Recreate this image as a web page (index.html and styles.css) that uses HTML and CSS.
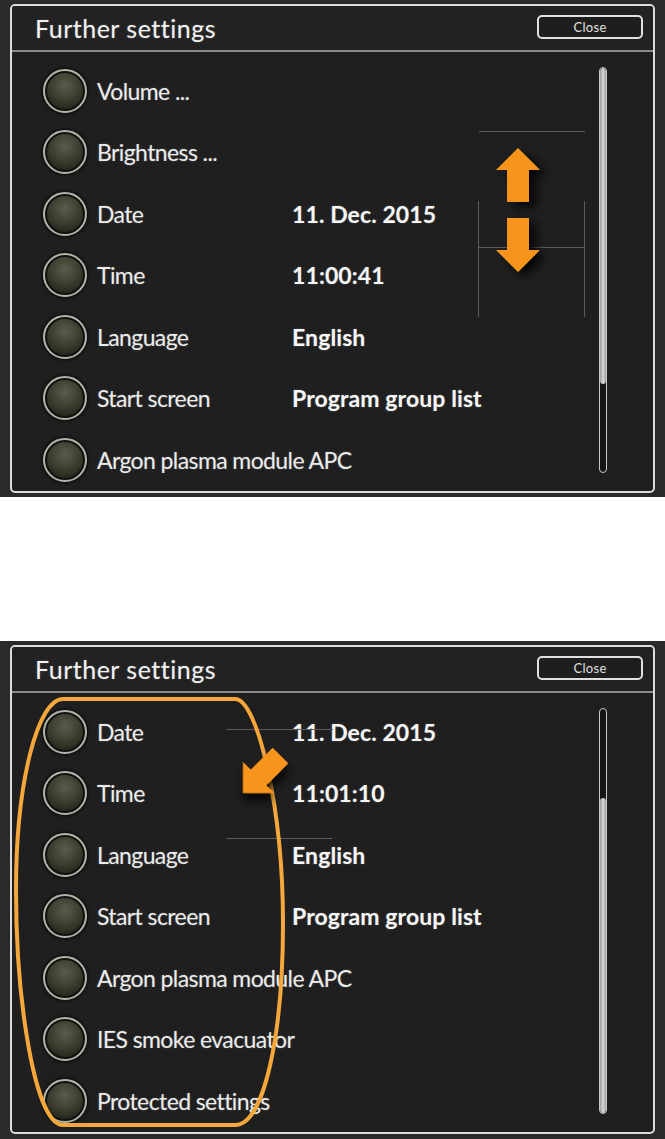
FILE: index.html
```html
<!DOCTYPE html>
<html lang="en">
<head>
<meta charset="utf-8">
<title>Further settings</title>
<link rel="stylesheet" href="styles.css">
</head>
<body>
<div class="page">
  <section class="screen screen-a">
    <div class="panel">
      <header class="panel-head">
        <h1 class="title">Further settings</h1>
        <button class="close">Close</button>
      </header>
      <div class="panel-body">
        <ul class="list">
          <li class="row"><span class="knob"></span><span class="label">Volume ...</span></li>
          <li class="row"><span class="knob"></span><span class="label">Brightness ...</span></li>
          <li class="row"><span class="knob"></span><span class="label">Date</span><span class="value">11. Dec. 2015</span></li>
          <li class="row"><span class="knob"></span><span class="label">Time</span><span class="value">11:00:41</span></li>
          <li class="row"><span class="knob"></span><span class="label">Language</span><span class="value">English</span></li>
          <li class="row"><span class="knob"></span><span class="label">Start screen</span><span class="value">Program group list</span></li>
          <li class="row"><span class="knob"></span><span class="label">Argon plasma module APC</span></li>
        </ul>
        <div class="scroll"><div class="thumb thumb-top"></div></div>
      </div>
    </div>
    <svg class="overlay" width="665" height="497" viewBox="0 0 665 497">
      <defs>
        <filter id="sh1" x="-50%" y="-50%" width="200%" height="200%">
          <feDropShadow dx="7" dy="5" stdDeviation="5" flood-color="#000" flood-opacity="0.85"/>
        </filter>
      </defs>
      <g stroke="#5c5c5c" stroke-width="1" fill="none">
        <line x1="479" y1="131.5" x2="585" y2="131.5"/>
        <line x1="478.5" y1="201" x2="478.5" y2="317"/>
        <line x1="584.5" y1="201" x2="584.5" y2="317"/>
        <line x1="479" y1="247.5" x2="584" y2="247.5"/>
      </g>
      <g fill="#f7941d" filter="url(#sh1)">
        <polygon points="518,148 540,170 529,170 529,202 507,202 507,170 496,170"/>
        <polygon points="518,272 540,250 529,250 529,218 507,218 507,250 496,250"/>
      </g>
    </svg>
  </section>

  <section class="screen screen-b">
    <div class="panel">
      <header class="panel-head">
        <h1 class="title">Further settings</h1>
        <button class="close">Close</button>
      </header>
      <div class="panel-body">
        <ul class="list">
          <li class="row"><span class="knob"></span><span class="label">Date</span><span class="value">11. Dec. 2015</span></li>
          <li class="row"><span class="knob"></span><span class="label">Time</span><span class="value">11:01:10</span></li>
          <li class="row"><span class="knob"></span><span class="label">Language</span><span class="value">English</span></li>
          <li class="row"><span class="knob"></span><span class="label">Start screen</span><span class="value">Program group list</span></li>
          <li class="row"><span class="knob"></span><span class="label">Argon plasma module APC</span></li>
          <li class="row"><span class="knob"></span><span class="label">IES smoke evacuator</span></li>
          <li class="row"><span class="knob"></span><span class="label">Protected settings</span></li>
        </ul>
        <div class="scroll"><div class="thumb thumb-bottom"></div></div>
      </div>
    </div>
    <svg class="overlay" width="665" height="498" viewBox="0 0 665 498">
      <defs>
        <filter id="sh2" x="-50%" y="-50%" width="200%" height="200%">
          <feDropShadow dx="6" dy="5" stdDeviation="5" flood-color="#000" flood-opacity="0.85"/>
        </filter>
      </defs>
      <g stroke="#5c5c5c" stroke-width="1" fill="none">
        <line x1="226" y1="88.5" x2="333" y2="88.5"/>
        <line x1="226" y1="197.5" x2="332" y2="197.5"/>
      </g>
      <path d="M63,58 L235,58 C258,58 283,170 283,282 C283,390 265,484 235,484 L63,484 C35,484 16,360 16,249 C16,140 38,58 63,58 Z" fill="none" stroke="#f5a73c" stroke-width="4"/>
      <polygon transform="translate(243,152) rotate(45)" points="0,0 -22,-22 -11,-22 -11,-53 11,-53 11,-22 22,-22" fill="#f7941d" filter="url(#sh2)"/>
    </svg>
  </section>
</div>
</body>
</html>
```

FILE: styles.css
```css
html, body {
  margin: 0;
  padding: 0;
  background: #ffffff;
}

.page {
  width: 665px;
  display: flex;
  flex-direction: column;
  gap: 144px;
}

.screen {
  position: relative;
  height: 497px;
  box-sizing: border-box;
  padding: 4px 10px 4px 10px;
  background: #2a2a2a;
  display: flex;
}

.screen-b {
  height: 498px;
  padding-bottom: 5px;
}

.panel {
  flex: 1;
  display: flex;
  flex-direction: column;
  border: 2px solid #dcdcdc;
  border-radius: 5px;
  background: #1f1f1f;
  overflow: hidden;
}

.panel-head {
  height: 44px;
  flex: none;
  display: flex;
  align-items: center;
  justify-content: space-between;
  padding: 0 10px 0 23px;
  border-bottom: 2px solid #8a8a8a;
  background: #222222;
}

.title {
  margin: 0;
  font-family: Lato, "Open Sans", sans-serif;
  font-weight: 400;
  font-size: 25px;
  color: #f2f2f2;
  letter-spacing: 0.5px;
  text-shadow: 0 0 2px rgba(255, 255, 255, 0.25);
}

.close {
  width: 106px;
  height: 24px;
  box-sizing: border-box;
  border: 2px solid #e0e0e0;
  border-radius: 5px;
  background: #1e1e1e;
  color: #e0e0e0;
  font-family: Lato, "Open Sans", sans-serif;
  font-size: 13px;
  letter-spacing: 0.3px;
  padding: 0;
  margin-top: -2px;
}

.panel-body {
  flex: 1;
  display: flex;
  min-height: 0;
}

.list {
  flex: 1;
  list-style: none;
  margin: 0;
  padding: 8px 0 0 31px;
  overflow: hidden;
}

.row {
  height: 61.5px;
  display: flex;
  align-items: center;
  font-family: Lato, "Open Sans", sans-serif;
  font-size: 23px;
  color: #ececec;
  text-shadow: 0 0 2px rgba(255, 255, 255, 0.25);
  white-space: nowrap;
}

.knob {
  flex: none;
  width: 44px;
  height: 44px;
  box-sizing: border-box;
  border-radius: 50%;
  border: 2px solid #b4b3aa;
  margin-right: 10px;
  background: radial-gradient(circle at 50% 36%, #5c5c4c 0%, #424234 38%, #29291f 70%, #12120c 100%);
  box-shadow: 0 0 3px 1px #0a0a0a, inset 0 0 0 2px #111110;
}

.label {
  width: 195px;
  flex: none;
  overflow: visible;
  letter-spacing: -0.6px;
}

.value {
  font-weight: 700;
  color: #f6f6f6;
  letter-spacing: 0.1px;
}

.scroll {
  flex: none;
  width: 8px;
  box-sizing: border-box;
  margin: 15px 46px 18px 0;
  border: 1px solid #c9c9c9;
  border-radius: 4px;
  background: #151515;
  overflow: hidden;
}

.thumb {
  height: 316px;
  background: linear-gradient(90deg, #9a9a9a, #d6d6d6 50%, #a0a0a0);
  border-radius: 3px;
}

.thumb-bottom {
  margin-top: 89px;
}

.overlay {
  position: absolute;
  left: 0;
  top: 0;
  pointer-events: none;
}
```
